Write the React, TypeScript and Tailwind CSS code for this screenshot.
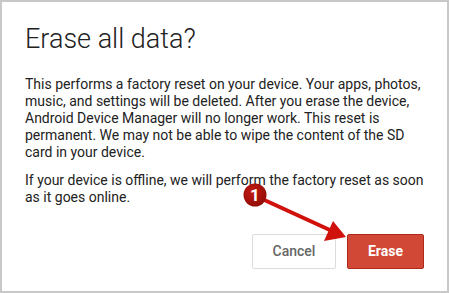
import React from "react";

/** Callout: numbered badge with an arrow pointing to the Erase button. */
function Callout() {
  return (
    <svg
      className="pointer-events-none absolute left-0 top-0"
      width={449}
      height={293}
      viewBox="0 0 449 293"
      aria-hidden="true"
    >
      <defs>
        <radialGradient id="badge" cx="40%" cy="35%" r="70%">
          <stop offset="0%" stopColor="#c41a12" />
          <stop offset="100%" stopColor="#8e0c06" />
        </radialGradient>
      </defs>
      <line x1="258" y1="196" x2="330" y2="229" stroke="#d0110c" strokeWidth="4" strokeLinecap="round" />
      <polygon points="344,235 322,239 331,219" fill="#d0110c" />
      <circle cx="253" cy="193" r="11.5" fill="url(#badge)" />
    </svg>
  );
}

export default function App() {
  return (
    <div
      className="relative h-[293px] w-[449px] overflow-hidden border-2 border-[#c8c8c8] bg-white text-[#222]"
      style={{ fontFamily: "Roboto, 'Liberation Sans', sans-serif" }}
    >
      <div className="flex h-full flex-col px-[23px] pt-[19px] pb-[22px]">
        <h1 className="text-[27px] leading-[36px] font-light text-[#212121]">Erase all data?</h1>
        <div className="mt-[19px] w-[404px] text-[14px] leading-[17px] text-[#222]">
          <p>
            This performs a factory reset on your device. Your apps, photos, music, and settings will be
            deleted. After you erase the device, Android Device Manager will no longer work. This reset is
            permanent. We may not be able to wipe the content of the SD card in your device.
          </p>
          <p className="mt-[11px]">
            If your device is offline, we will perform the factory reset as soon as it goes online.
          </p>
        </div>
        <div className="mt-auto flex justify-end gap-[11px]">
          <button className="h-[35px] w-[84px] rounded-[2px] border border-[#dcdcdc] bg-white text-[14px] font-medium text-[#666]">
            Cancel
          </button>
          <button className="h-[35px] w-[77px] rounded-[2px] border border-[#b0281a] bg-[#d14836] text-[14px] font-bold text-white">
            Erase
          </button>
        </div>
      </div>
      <Callout />
      <span className="pointer-events-none absolute left-[247px] top-[183px] w-[12px] text-center text-[17px] leading-[20px] font-bold text-white">
        1
      </span>
    </div>
  );
}
